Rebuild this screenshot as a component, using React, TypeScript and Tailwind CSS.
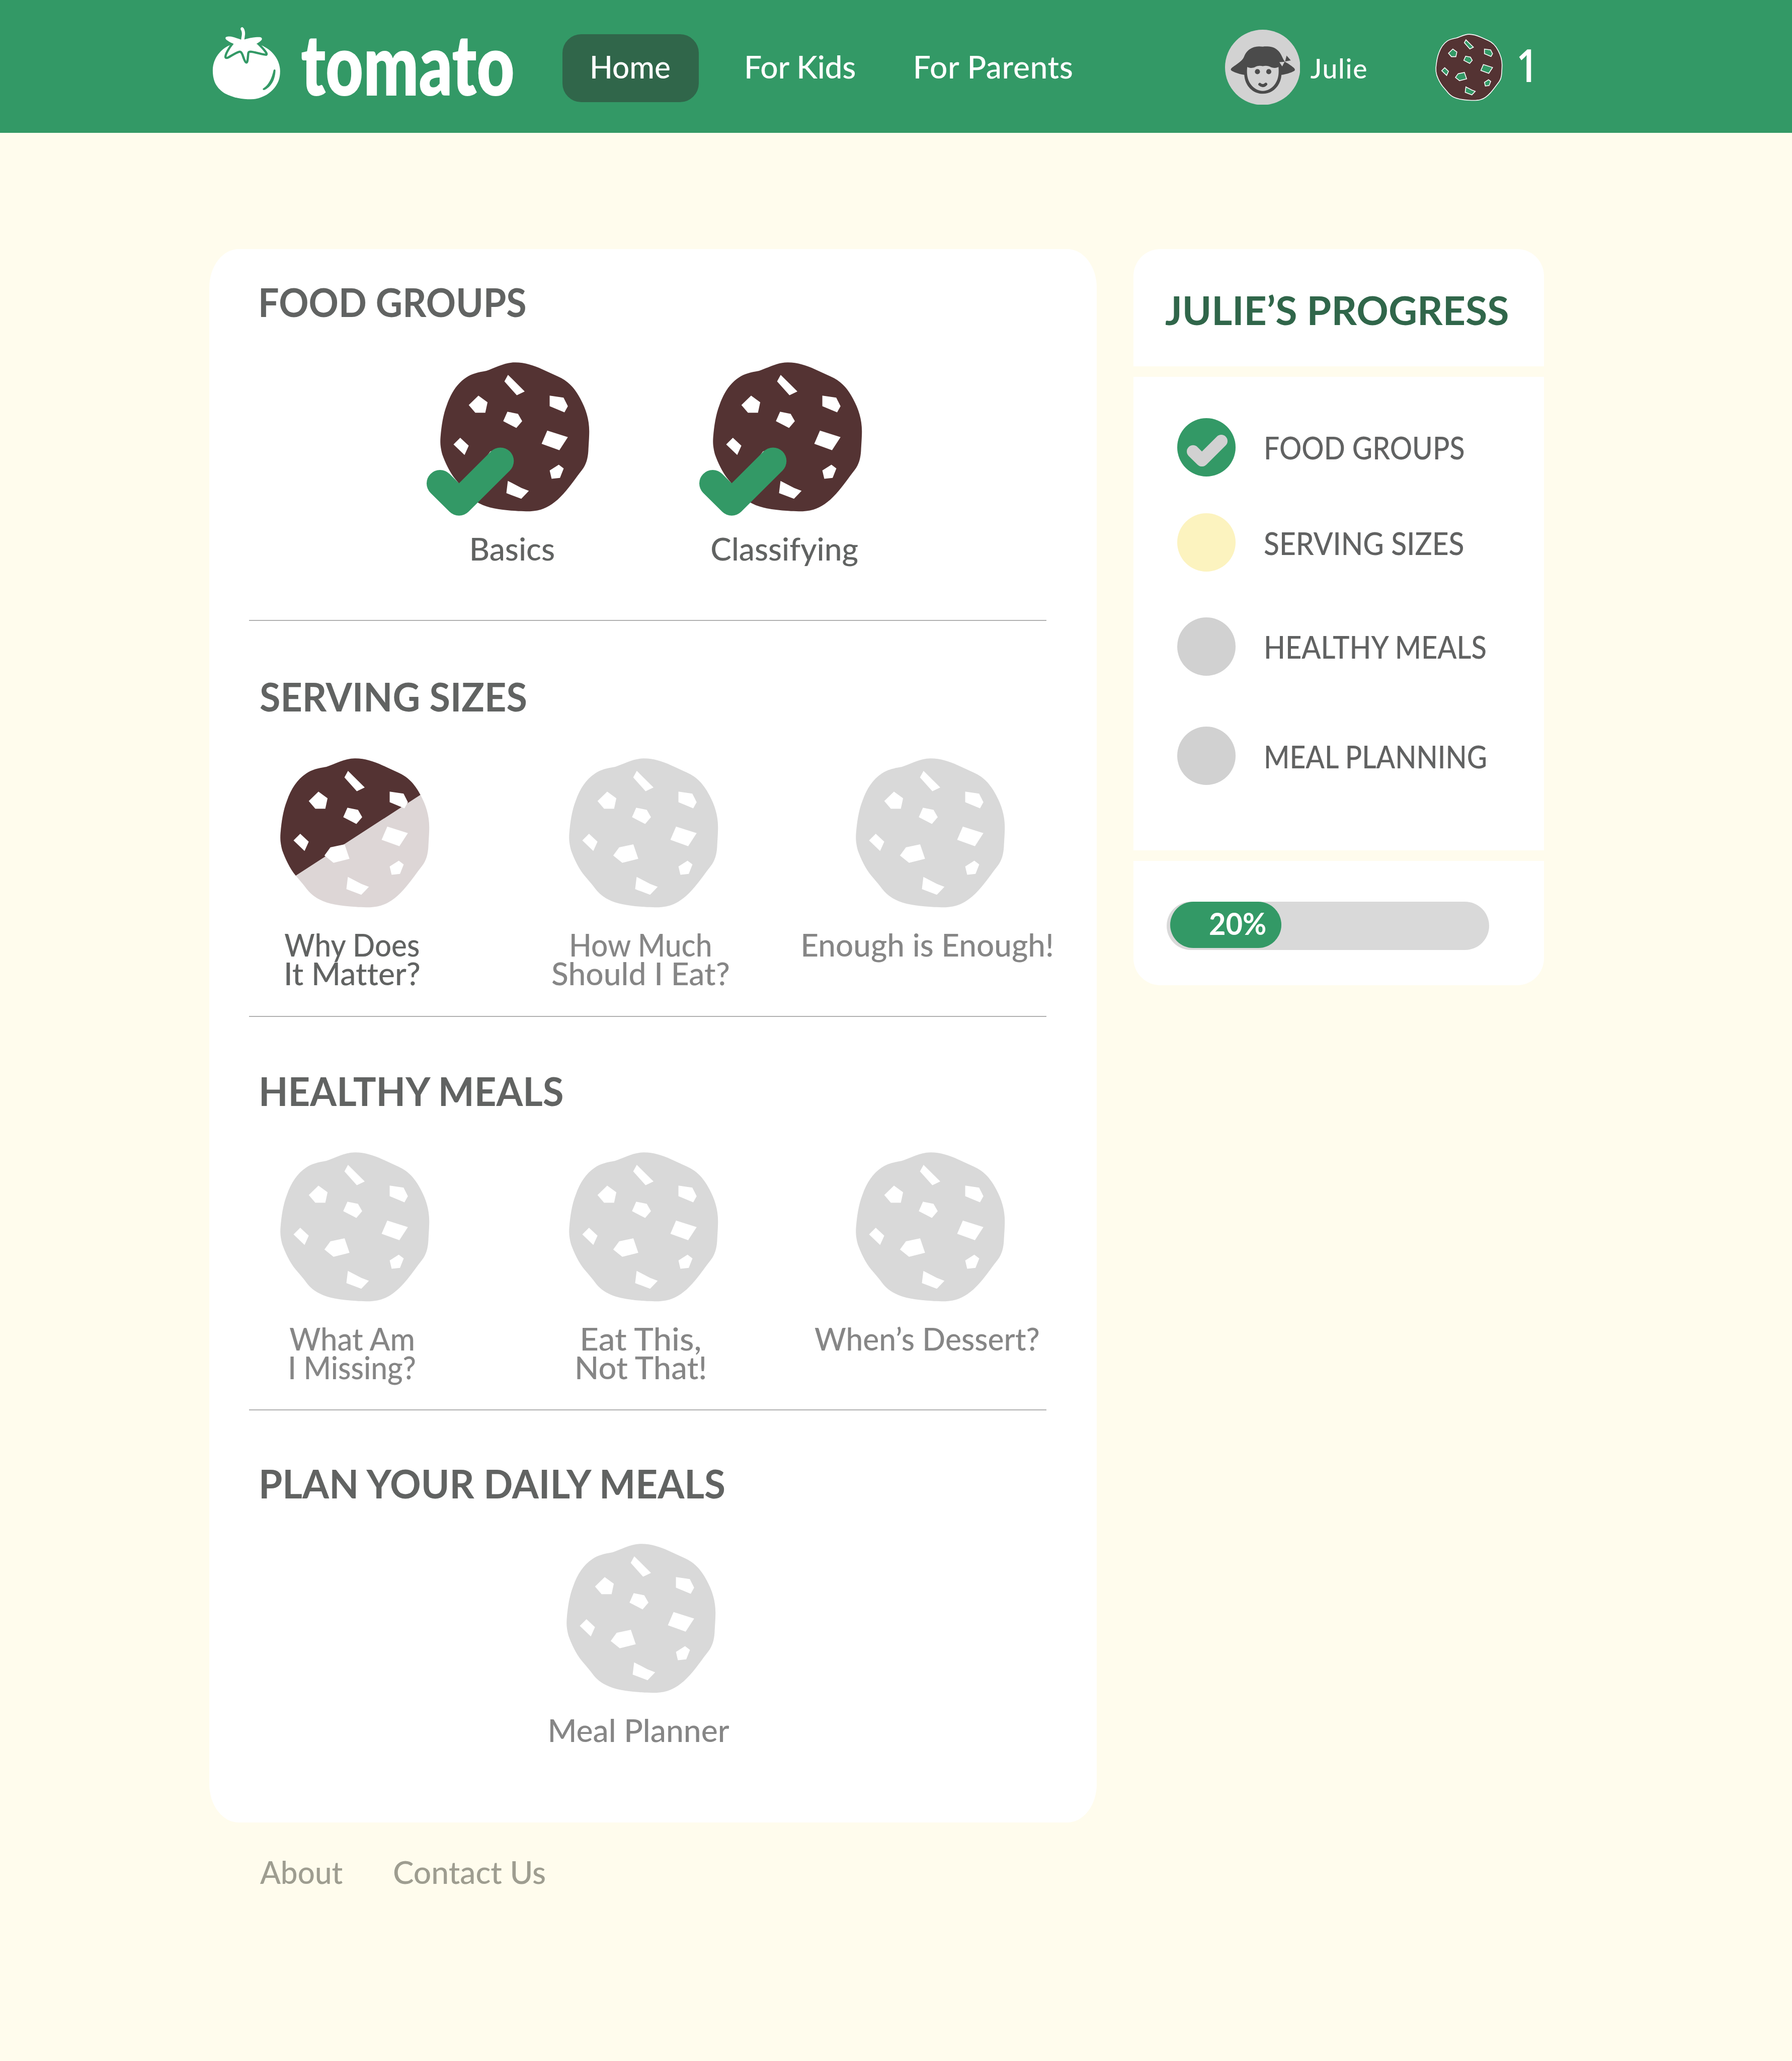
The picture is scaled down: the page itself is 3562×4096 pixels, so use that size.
import type { ReactNode } from "react";

const HOLES = [
  "530,182 642,293 589,319 506,226",
  "332,321 393,366 378,436 311,436 267,384",
  "526,429 597,443 625,492 586,538 498,492",
  "809,321 902,335 931,392 908,433 809,392",
  "793,555 931,599 874,687 755,644",
  "210,603 267,656 239,719 165,648",
  "412,694 507,674 540,771 433,798 372,749",
  "870,784 903,809 878,872 822,878 809,822",
  "529,892 620,939 670,959 619,1012 519,974",
];

const COOKIE =
  "M575 99C640 98 700 118 760 145L865 193C940 225 985 285 1015 343C1052 412 1074 480 1074 560C1074 600 1070 650 1068 690C1065 740 1055 780 1025 820C980 877 950 925 900 980C850 1035 800 1070 750 1084C700 1098 650 1098 580 1093C480 1087 400 1075 340 1044C290 1018 265 990 240 955C220 930 200 908 180 884C140 835 110 770 90 715C78 670 75 640 78 600C85 520 95 450 120 385C150 300 190 240 250 200C290 173 325 166 385 155C440 138 505 99 575 99Z";

type CookieKind = "done" | "half" | "locked";

function Cookie({ kind }: { kind: CookieKind }) {
  return (
    <svg viewBox="76 98 999 999" className="block size-[333px] shrink-0 overflow-visible">
      <path d={COOKIE} fill={kind === "done" ? "#543333" : kind === "half" ? "#ddd6d6" : "#d9d9d9"} />
      {kind === "half" && (
        <>
          <clipPath id="half-cookie">
            <path d={COOKIE} />
          </clipPath>
          <path d="M0 1000L1200 223V0H0Z" fill="#543333" clipPath="url(#half-cookie)" />
        </>
      )}
      {HOLES.map((points) => (
        <polygon key={points} points={points} fill="#fff" />
      ))}
      {kind === "done" && (
        <polyline
          points="75,909 202,1035 479,759"
          fill="none"
          stroke="#339966"
          strokeWidth="180"
          strokeLinecap="round"
          strokeLinejoin="round"
        />
      )}
    </svg>
  );
}

function CookieBadge() {
  return (
    <svg viewBox="76 98 999 999" className="ml-[150px] block size-[148px] shrink-0 overflow-visible">
      <g fill="#543333" stroke="#fff" strokeWidth="12">
        <path d={COOKIE} />
        {HOLES.map((points) => (
          <polygon key={points} points={points} fill="#339966" />
        ))}
      </g>
    </svg>
  );
}

function TomatoMark() {
  return (
    <svg viewBox="0 0 540 540" className="block size-[180px] shrink-0">
      <path
        fill="#fff"
        d="M145 151C85 175 30 240 30 318C30 400 60 440 110 473C165 503 230 513 285 513C350 513 410 480 445 435C470 400 481 370 481 325C480 250 430 180 350 150L322 142H170Z"
      />
      <path
        fill="none"
        stroke="#339966"
        strokeWidth="15"
        strokeLinejoin="round"
        d="M164 138C140 168 114 210 115 230C117 239 127 237 136 232C160 218 190 200 205 196C215 192 223 200 229 214C238 240 247 267 255 267C264 267 264 240 268 205C269 195 276 193 290 195C325 200 368 215 388 215C396 211 385 195 372 180C358 164 342 148 332 138"
      />
      <path
        fill="#fff"
        d="M170 142C150 134 120 118 116 108C112 95 125 92 145 93C170 95 200 108 220 114L222 98C227 75 226 62 219 50C212 38 220 29 228 30C242 36 248 60 246 80C244 95 243 105 241 113C270 105 310 95 345 97C362 98 362 112 355 118C347 127 335 135 322 142L300 160H190Z"
      />
      <path
        fill="#339966"
        d="M437 319C440 311 450 311 450 320C449 360 435 422 378 450C366 455 360 443 370 439C405 415 425 375 437 319Z"
      />
    </svg>
  );
}

function Avatar() {
  return (
    <svg viewBox="27 18 504 504" className="block size-[168px] shrink-0">
      <circle cx="279" cy="270" r="252" fill="#d2d2d2" />
      <path
        fill="#4b4b4b"
        fillRule="evenodd"
        d="M280 132C245 126 215 132 190 150C170 166 162 180 154 200C145 222 120 240 95 257C80 267 66 275 66 285C66 292 80 298 95 304C115 312 135 317 156 320C160 395 215 447 280 447C345 447 400 395 405 320C430 318 465 308 490 294C497 289 496 282 490 276C478 264 455 248 428 233C415 215 410 200 402 185C385 150 350 128 305 130C295 130 287 130 280 132ZM176 267C190 275 212 276 225 270C240 258 262 258 280 262C298 257 320 259 336 270C350 276 370 275 385 267C389 310 385 350 362 382C340 412 310 428 280 428C250 428 220 412 198 382C175 350 171 305 176 267Z"
      />
      <path fill="#4b4b4b" stroke="#d2d2d2" strokeWidth="2" d="M439 190L469 224L428 232Z" />
      <path fill="#d2d2d2" d="M391 235L426 233L410 264Z" />
      <circle cx="244" cy="299" r="17" fill="#4b4b4b" />
      <circle cx="320" cy="299" r="17" fill="#4b4b4b" />
      <path d="M260 384Q280 402 300 383" fill="none" stroke="#4b4b4b" strokeWidth="20" strokeLinecap="round" />
    </svg>
  );
}

function Title({ children, className }: { children: ReactNode; className: string }) {
  return (
    <h2 className={`origin-left text-[89px] leading-[100px] font-bold whitespace-nowrap text-[#616362] ${className}`}>
      {children}
    </h2>
  );
}

function Lesson({
  kind,
  lines,
  active = false,
  className = "",
}: {
  kind: CookieKind;
  lines: [string, string][];
  active?: boolean;
  className?: string;
}) {
  return (
    <div className={`flex w-[333px] shrink-0 flex-col items-center ${className}`}>
      <Cookie kind={kind} />
      <div
        className={`mt-[50px] flex flex-col items-center pr-[13px] text-[70px] leading-[64px] ${
          active ? "text-[#616362]" : "text-[#868686]"
        }`}
      >
        {lines.map(([text, fit]) => (
          <span key={text} className={`whitespace-nowrap ${fit}`}>
            {text}
          </span>
        ))}
      </div>
    </div>
  );
}

function Step({
  color,
  label,
  fit,
  className = "",
  done = false,
}: {
  color: string;
  label: string;
  fit: string;
  className?: string;
  done?: boolean;
}) {
  return (
    <div className={`flex h-[130px] items-center ${className}`}>
      <div className={`flex size-[130px] shrink-0 items-center justify-center rounded-full ${color}`}>
        {done && (
          <svg viewBox="-15 669 584 456" className="mt-[15px] ml-[3px] h-[71px] w-[91px]">
            <polyline
              points="75,909 202,1035 479,759"
              fill="none"
              stroke="#d1d1d1"
              strokeWidth="180"
              strokeLinecap="round"
              strokeLinejoin="round"
            />
          </svg>
        )}
      </div>
      <span className={`ml-[63px] origin-left text-[70px] leading-[80px] whitespace-nowrap text-[#616262] ${fit}`}>
        {label}
      </span>
    </div>
  );
}

export default function App() {
  return (
    <div className="h-[4599.5px] w-[4000px] overflow-hidden bg-[#fffced] font-['Lato',sans-serif] font-medium [font-variant-ligatures:none] [zoom:0.8905]">
      <header className="flex h-[296px] bg-[#339966] pl-[465px] text-white">
        <div className="flex h-[280px] w-[791px] items-center">
          <TomatoMark />
          <span className="ml-[27px] origin-left scale-x-[0.765] text-[190px] leading-[190px] font-extrabold">tomato</span>
        </div>
        <nav className="flex h-[304px] w-[1478px] items-center text-[70px] leading-[80px] whitespace-nowrap">
          <div className="flex h-[152px] w-[304px] items-center rounded-[42px] bg-[#30664a] pl-[60px]">
            <span className="-mt-[8px] origin-left scale-x-[0.965]">Home</span>
          </div>
          <span className="-mt-[8px] ml-[101px] w-[377px] tracking-[-0.3px]">For Kids</span>
          <span className="-mt-[8px] tracking-[0.7px]">For Parents</span>
        </nav>
        <div className="flex h-[300px] items-center">
          <Avatar />
          <span className="mt-[4px] ml-[23px] w-[130px] text-[60px] leading-[60px] tracking-[2px]">Julie</span>
          <CookieBadge />
          <span className="-mt-[11px] ml-[32px] origin-left scale-x-[0.85] font-['Open_Sans',sans-serif] text-[101px] leading-[100px] font-semibold">
            1
          </span>
        </div>
      </header>

      <div className="flex items-start gap-[82px] pt-[260px] pl-[467px]">
        <main className="h-[3511px] w-[1981px] rounded-[66px/86px] bg-white pl-[89px]">
          <section className="h-[830px] w-[1780px] border-b-[3px] border-[#b0b0b0] pt-[67px]">
            <Title className="ml-[20px] scale-x-[0.928]">FOOD GROUPS</Title>
            <div className="mt-[86px] ml-[427px] flex gap-[275px]">
              <Lesson kind="done" active lines={[["Basics", ""]]} />
              <Lesson kind="done" active lines={[["Classifying", ""]]} />
            </div>
          </section>
          <section className="h-[884px] w-[1780px] border-b-[3px] border-[#b0b0b0] pt-[118px]">
            <Title className="ml-[24px] scale-x-[0.952]">SERVING SIZES</Title>
            <div className="mt-[88px] ml-[70px] flex">
              <Lesson
                kind="half"
                active
                lines={[
                  ["Why Does", "scale-x-[0.935]"],
                  ["It Matter?", ""],
                ]}
              />
              <Lesson
                kind="locked"
                className="ml-[311px]"
                lines={[
                  ["How Much", "scale-x-[0.94]"],
                  ["Should I Eat?", ""],
                ]}
              />
              <Lesson kind="locked" className="ml-[307px]" lines={[["Enough is Enough!", "scale-x-[0.995]"]]} />
            </div>
          </section>
          <section className="h-[878px] w-[1780px] border-b-[3px] border-[#b0b0b0] pt-[114px]">
            <Title className="ml-[21px] scale-x-[0.96]">HEALTHY MEALS</Title>
            <div className="mt-[88px] ml-[70px] flex">
              <Lesson
                kind="locked"
                lines={[
                  ["What Am", "scale-x-[0.96]"],
                  ["I Missing?", "scale-x-[0.94]"],
                ]}
              />
              <Lesson
                kind="locked"
                className="ml-[311px]"
                lines={[
                  ["Eat This,", "scale-x-[1.05]"],
                  ["Not That!", "scale-x-[1.015]"],
                ]}
              />
              <Lesson kind="locked" className="ml-[307px]" lines={[["When’s Dessert?", "scale-x-[0.97]"]]} />
            </div>
          </section>
          <section className="pt-[112px]">
            <Title className="ml-[21px] scale-x-[0.965]">PLAN YOUR DAILY MEALS</Title>
            <Lesson kind="locked" className="mt-[85px] ml-[709px]" lines={[["Meal Planner", ""]]} />
          </section>
        </main>

        <aside className="flex w-[916px] flex-col gap-[23px]">
          <div className="h-[262px] rounded-t-[60px] bg-white pt-[85px] pl-[71px]">
            <h2 className="origin-left scale-x-[0.994] text-[89px] leading-[100px] font-bold whitespace-nowrap text-[#30664a]">
              JULIE’S PROGRESS
            </h2>
          </div>
          <div className="h-[1057px] bg-white pt-[92px] pl-[98px]">
            <Step color="bg-[#339966]" label="FOOD GROUPS" fit="scale-x-[0.888]" done />
            <Step color="bg-[#fcf3bf]" label="SERVING SIZES" className="mt-[83px]" fit="scale-x-[0.914]" />
            <Step color="bg-[#d1d1d1]" label="HEALTHY MEALS" className="mt-[102px]" fit="scale-x-[0.9]" />
            <Step color="bg-[#d1d1d1]" label="MEAL PLANNING" className="mt-[114px]" fit="scale-x-[0.886]" />
          </div>
          <div className="h-[278px] rounded-b-[60px] bg-white pt-[91px] pl-[74px]">
            <div className="h-[108px] w-[720px] rounded-full bg-[#d9d9d9] pl-[8px]">
              <div className="flex h-[104px] w-[248px] items-center rounded-full bg-[#339966] pl-[86px]">
                <span className="-mt-[8px] origin-left scale-x-[0.94] text-[69px] leading-[80px] font-bold text-white">
                  20%
                </span>
              </div>
            </div>
          </div>
        </aside>
      </div>

      <footer className="mt-[70px] flex pl-[581px] text-[70px] leading-[80px] text-[#9e9d90]">
        <span className="w-[296px] origin-left scale-x-[0.965]">About</span>
        <span className="origin-left">Contact Us</span>
      </footer>
    </div>
  );
}
